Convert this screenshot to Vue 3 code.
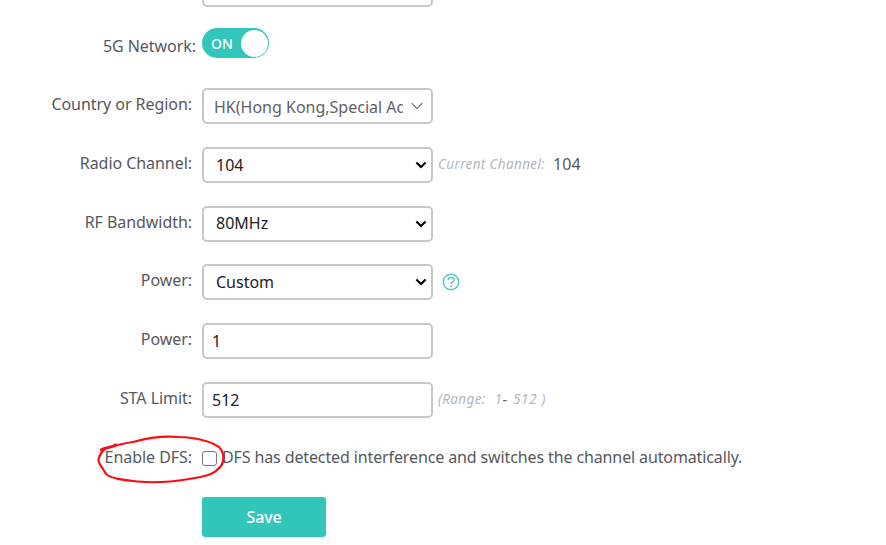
<template>
  <div class="wifi-form">
    <div class="row row-cut">
      <label class="label"></label>
      <input class="field" type="text">
    </div>

    <div class="row row-switch">
      <label class="label">5G Network:</label>
      <div class="switch" :class="{ on: enabled }" @click="enabled = !enabled">
        <span class="switch-text">{{ enabled ? 'ON' : 'OFF' }}</span>
        <span class="switch-dot"></span>
      </div>
    </div>

    <div class="row">
      <label class="label">Country or Region:</label>
      <div class="field country">
        <span class="country-text">{{ country }}</span>
        <svg class="arrow-thin" width="12" height="8" viewBox="0 0 12 8">
          <path d="M0.8 1.2 L6 6.6 L11.2 1.2" fill="none" stroke="#6b6e73" stroke-width="1.1" />
        </svg>
      </div>
    </div>

    <div v-for="item in selects" :key="item.key" class="row" :class="'row-' + item.key">
      <label class="label">{{ item.label }}</label>
      <div class="field select">
        <span class="value">{{ item.value }}</span>
        <svg class="arrow" width="12" height="8" viewBox="0 0 12 8">
          <path d="M1.4 1.6 L6 6 L10.6 1.6" fill="none" stroke="#000" stroke-width="2.1" />
        </svg>
      </div>
      <div v-if="item.key === 'channel'" class="hint">
        <i>Current Channel:</i><span class="current">104</span>
      </div>
      <svg v-if="item.key === 'power'" class="help" width="18" height="18" viewBox="0 0 18 18">
        <circle cx="9" cy="9" r="7.7" fill="none" stroke="#4cc9c0" stroke-width="1.4" />
        <path d="M6.2 7.2 C6.2 3.5 11.9 3.5 11.9 7 C11.9 9 9.1 8.9 9.1 11.1" fill="none" stroke="#4cc9c0" stroke-width="1.5" />
        <circle cx="9.1" cy="13.2" r="1" fill="#4cc9c0" />
      </svg>
    </div>

    <div class="row">
      <label class="label">Power:</label>
      <input v-model="power" class="field" type="text">
    </div>

    <div class="row">
      <label class="label">STA Limit:</label>
      <input v-model="staLimit" class="field" type="text">
      <div class="hint range"><i>(Range:</i><i class="min">1</i><span class="dash">-</span><i class="max">512 )</i></div>
    </div>

    <div class="row row-dfs">
      <label class="label">Enable DFS:</label>
      <input v-model="dfs" class="checkbox" type="checkbox">
      <span class="dfs-text">DFS has detected interference and switches the channel automatically.</span>
      <svg class="marker" width="132" height="54" viewBox="0 0 132 54">
        <path d="M6 15.5 C11 13 16 13.5 21 10.5 M6 16 C16 13 26 9.5 38 8 C52 4 68 1.5 84 3 C99 3.5 115 7 124 13 C130 19 130 30 123 35 C118 41 107 43 94 45 C76 48 57 49 43 47.5 C29 46 17 45 11 40 C8 34 3 30 3.5 25 C5 20 6 18 10 15 C14 13 17 13 20 12" />
      </svg>
    </div>

    <div class="actions">
      <button class="save">Save</button>
    </div>
  </div>
</template>

<script setup>
import { ref } from 'vue'

const enabled = ref(true)
const country = ref('HK(Hong Kong,Special Ad')
const power = ref('1')
const staLimit = ref('512')
const dfs = ref(false)

const selects = ref([
  { key: 'channel', label: 'Radio Channel:', value: '104' },
  { key: 'bandwidth', label: 'RF Bandwidth:', value: '80MHz' },
  { key: 'power', label: 'Power:', value: 'Custom' }
])
</script>

<style>
body {
  margin: 0;
  background: #fff;
  overflow: hidden;
}
</style>

<style scoped>
.wifi-form {
  width: 886px;
  height: 545px;
  overflow: hidden;
  font-family: "Noto Sans", "Open Sans", sans-serif;
  font-size: 16px;
  color: #55585d;
}

.row {
  display: flex;
  align-items: flex-start;
  height: 59px;
}

.row-cut {
  height: 29px;
  margin-top: -29px;
}

.row-switch {
  box-sizing: border-box;
  height: 88px;
  padding-top: 28px;
}

.row-bandwidth {
  height: 58px;
}

.label {
  flex: none;
  width: 192px;
  margin-right: 10px;
  line-height: 32px;
  letter-spacing: -0.05px;
  text-align: right;
  white-space: nowrap;
}

.row-switch .label {
  width: 196px;
  margin-right: 6px;
  line-height: 36px;
}

.field {
  flex: none;
  box-sizing: border-box;
  width: 231px;
  height: 36px;
  padding: 0 8px;
  border: 2px solid #c6c8cd;
  border-radius: 5px;
  outline: none;
  background: #fff;
  font: inherit;
  color: #222;
}

.country {
  display: flex;
  align-items: center;
  padding: 0 8px 0 10px;
  color: #606266;
}

.country-text {
  width: 189px;
  margin: 1px 8px 0 0;
  overflow: hidden;
  white-space: nowrap;
}

.select {
  display: flex;
  align-items: center;
  justify-content: space-between;
  padding: 0 4px 0 12px;
}

.row-bandwidth .value {
  margin-top: -2px;
}

.hint {
  display: flex;
  align-items: center;
  height: 34px;
  margin-left: 5px;
  font-size: 14px;
  color: #b4b6bb;
  white-space: nowrap;
}

.hint i {
  font-size: 13.5px;
  letter-spacing: 0.35px;
}

.current {
  margin-left: 8px;
  font-size: 16px;
  color: #55585d;
}

.hint .min {
  margin-left: 9px;
}

.dash {
  color: #55585d;
}

.hint .max {
  margin-left: 6px;
  letter-spacing: 0.7px;
}

.help {
  margin: 9px 0 0 9px;
}

.switch {
  display: flex;
  align-items: center;
  justify-content: space-between;
  box-sizing: border-box;
  width: 67px;
  height: 30px;
  padding: 0 1px 0 9px;
  border-radius: 15px;
  background: #c8cacf;
}

.switch.on {
  background: #32c5b9;
}

.switch-text {
  font-size: 14px;
  font-weight: 500;
  color: #fff;
}

.switch-dot {
  width: 27px;
  height: 27px;
  border-radius: 50%;
  background: #fff;
}

.row-dfs {
  position: relative;
  height: 56px;
}

.checkbox {
  flex: none;
  appearance: none;
  box-sizing: border-box;
  width: 15px;
  height: 15px;
  margin: 10px 5px 0 0;
  border: 1px solid #767676;
  border-radius: 3px;
  background: #fff;
}

.dfs-text {
  line-height: 32px;
  letter-spacing: -0.12px;
  white-space: nowrap;
}

.marker {
  position: absolute;
  top: -7px;
  left: 95px;
}

.marker path {
  fill: none;
  stroke: #fb0d12;
  stroke-width: 2.2;
  stroke-linecap: round;
  stroke-linejoin: round;
}

.actions {
  padding-left: 202px;
}

.save {
  display: block;
  width: 124px;
  height: 40px;
  padding: 0;
  border: none;
  border-radius: 3px;
  background: #32c5b9;
  font: inherit;
  font-weight: 500;
  letter-spacing: -0.2px;
  color: #fff;
}
</style>
